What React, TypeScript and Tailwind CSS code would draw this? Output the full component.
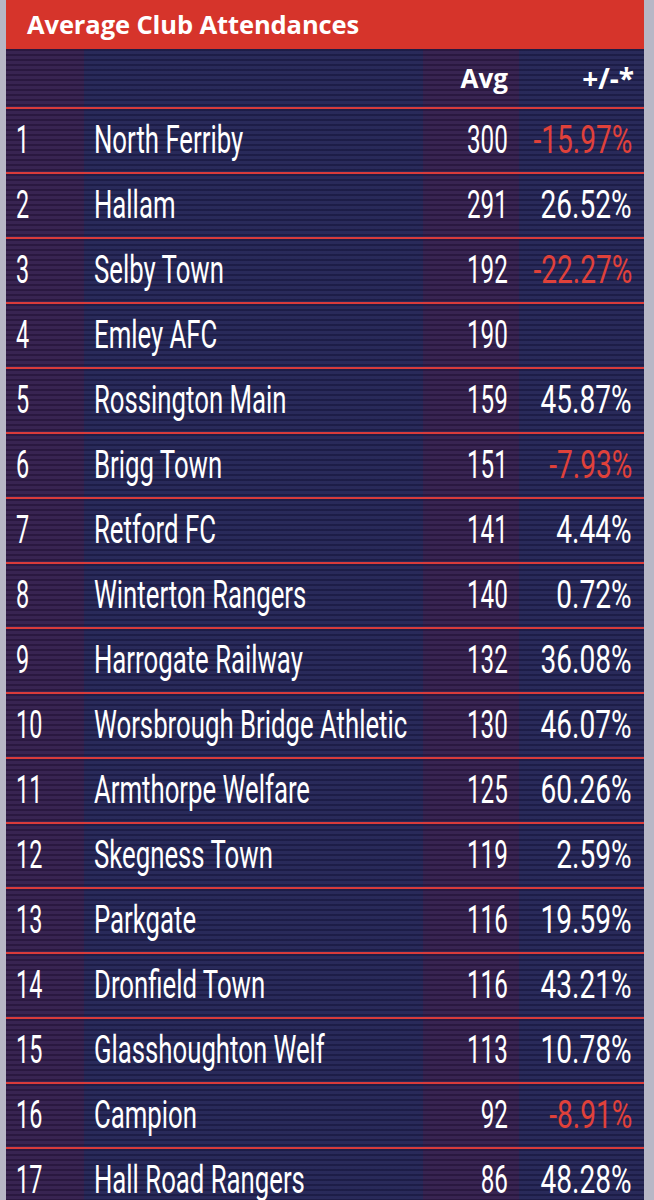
import React from 'react';

type Row = { rank: number; club: string; avg: number; change?: string };

const ROWS: Row[] = [
    { rank: 1, club: 'North Ferriby', avg: 300, change: '-15.97%' },
    { rank: 2, club: 'Hallam', avg: 291, change: '26.52%' },
    { rank: 3, club: 'Selby Town', avg: 192, change: '-22.27%' },
    { rank: 4, club: 'Emley AFC', avg: 190 },
    { rank: 5, club: 'Rossington Main', avg: 159, change: '45.87%' },
    { rank: 6, club: 'Brigg Town', avg: 151, change: '-7.93%' },
    { rank: 7, club: 'Retford FC', avg: 141, change: '4.44%' },
    { rank: 8, club: 'Winterton Rangers', avg: 140, change: '0.72%' },
    { rank: 9, club: 'Harrogate Railway', avg: 132, change: '36.08%' },
    { rank: 10, club: 'Worsbrough Bridge Athletic', avg: 130, change: '46.07%' },
    { rank: 11, club: 'Armthorpe Welfare', avg: 125, change: '60.26%' },
    { rank: 12, club: 'Skegness Town', avg: 119, change: '2.59%' },
    { rank: 13, club: 'Parkgate', avg: 116, change: '19.59%' },
    { rank: 14, club: 'Dronfield Town', avg: 116, change: '43.21%' },
    { rank: 15, club: 'Glasshoughton Welf', avg: 113, change: '10.78%' },
    { rank: 16, club: 'Campion', avg: 92, change: '-8.91%' },
    { rank: 17, club: 'Hall Road Rangers', avg: 86, change: '48.28%' },
];

// scan-line stripes laid over each cell's colour
const stripes =
    'bg-[repeating-linear-gradient(to_bottom,rgba(0,0,0,0.16)_0px,rgba(0,0,0,0.16)_2px,rgba(255,255,255,0.03)_2px,rgba(255,255,255,0.03)_5px)]';
const navy = `bg-[#222355] ${stripes}`;
const plum = `bg-[#321d4c] ${stripes}`;

const cond = "font-['Roboto',sans-serif] text-[39px] leading-none whitespace-nowrap";

const TableRow: React.FC<{ row: Row }> = ({ row }) => {
    const neg = row.change?.startsWith('-');
    return (
        <div className="grid grid-cols-[78px_339px_96px_125px] h-[65px] border-b-2 border-[#d83b3b]">
            <div className={`${plum} flex items-center pl-[10px]`}>
                <span className={`${cond} text-white scale-x-[0.6] origin-left`}>{row.rank}</span>
            </div>
            <div className={`${navy} flex items-center pl-[10px]`}>
                <span className={`${cond} text-white scale-x-[0.66] origin-left`}>{row.club}</span>
            </div>
            <div className={`${plum} flex items-center justify-end pr-[11px]`}>
                <span className={`${cond} text-white scale-x-[0.62] origin-right`}>{row.avg}</span>
            </div>
            <div className={`${navy} flex items-center justify-end pr-[12px]`}>
                {row.change && (
                    <span className={`${cond} scale-x-[0.72] origin-right ${neg ? 'text-[#e0413a]' : 'text-white'}`}>
                        {row.change}
                    </span>
                )}
            </div>
        </div>
    );
};

export default function App() {
    return (
        <div className="w-[654px] h-[1200px] overflow-hidden bg-[#b7b7c6] pl-[6px] pr-[10px]">
            <div className="h-[49px] bg-[#d6342b] flex items-center pl-[21px]">
                <h1 className="font-['Open_Sans',sans-serif] font-bold text-[25.5px] text-white tracking-[-0.1px]">
                    Average Club Attendances
                </h1>
            </div>
            <div className="grid grid-cols-[78px_339px_96px_125px] h-[60px] border-b-2 border-[#d83b3b]">
                <div className={plum} />
                <div className={navy} />
                <div className={`${plum} flex items-center justify-end pr-[11px]`}>
                    <span className="font-['Open_Sans',sans-serif] font-bold text-[26px] text-white">Avg</span>
                </div>
                <div className={`${navy} flex items-center justify-end pr-[10px]`}>
                    <span className="font-['Open_Sans',sans-serif] font-bold text-[28px] text-white">+/-*</span>
                </div>
            </div>
            {ROWS.map(row => (
                <TableRow key={row.rank} row={row} />
            ))}
        </div>
    );
}
